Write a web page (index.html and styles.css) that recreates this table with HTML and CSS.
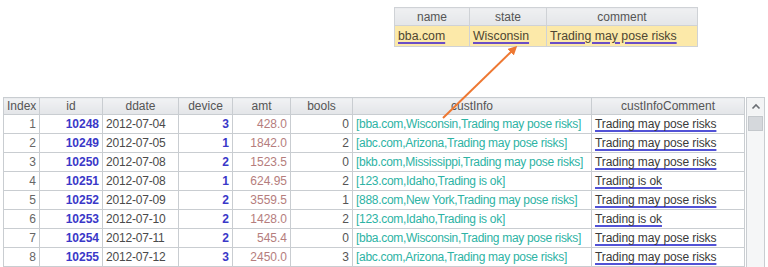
FILE: index.html
```html
<!DOCTYPE html>
<html>
<head>
<meta charset="utf-8">
<link rel="stylesheet" href="styles.css">
</head>
<body>
<div class="stage">
  <table class="lookup">
    <colgroup><col class="c-name"><col class="c-state"><col class="c-comment"></colgroup>
    <thead><tr><th>name</th><th>state</th><th>comment</th></tr></thead>
    <tbody><tr><td><span class="ul">bba.com</span></td><td><span class="ul">Wisconsin</span></td><td><span class="ul">Trading may pose risks</span></td></tr></tbody>
  </table>

  <div class="grid-wrap">
    <table class="main">
      <colgroup>
        <col class="w-index"><col class="w-id"><col class="w-ddate"><col class="w-device"><col class="w-amt"><col class="w-bools"><col class="w-cust"><col class="w-comment">
      </colgroup>
      <thead>
        <tr><th>Index</th><th>id</th><th>ddate</th><th>device</th><th>amt</th><th>bools</th><th>custInfo</th><th>custInfoComment</th></tr>
      </thead>
      <tbody>
        <tr><td class="idx">1</td><td class="id">10248</td><td class="date">2012-07-04</td><td class="dev">3</td><td class="amt">428.0</td><td class="bool">0</td><td class="cust">[bba.com,Wisconsin,Trading may pose risks]</td><td class="cmt"><span class="ul2">Trading may pose risks</span></td></tr>
        <tr><td class="idx">2</td><td class="id">10249</td><td class="date">2012-07-05</td><td class="dev">1</td><td class="amt">1842.0</td><td class="bool">2</td><td class="cust">[abc.com,Arizona,Trading may pose risks]</td><td class="cmt"><span class="ul2">Trading may pose risks</span></td></tr>
        <tr><td class="idx">3</td><td class="id">10250</td><td class="date">2012-07-08</td><td class="dev">2</td><td class="amt">1523.5</td><td class="bool">0</td><td class="cust">[bkb.com,Mississippi,Trading may pose risks]</td><td class="cmt"><span class="ul2">Trading may pose risks</span></td></tr>
        <tr><td class="idx">4</td><td class="id">10251</td><td class="date">2012-07-08</td><td class="dev">1</td><td class="amt">624.95</td><td class="bool">2</td><td class="cust">[123.com,Idaho,Trading is ok]</td><td class="cmt"><span class="ul2">Trading is ok</span></td></tr>
        <tr><td class="idx">5</td><td class="id">10252</td><td class="date">2012-07-09</td><td class="dev">2</td><td class="amt">3559.5</td><td class="bool">1</td><td class="cust">[888.com,New York,Trading may pose risks]</td><td class="cmt"><span class="ul2">Trading may pose risks</span></td></tr>
        <tr><td class="idx">6</td><td class="id">10253</td><td class="date">2012-07-10</td><td class="dev">2</td><td class="amt">1428.0</td><td class="bool">2</td><td class="cust">[123.com,Idaho,Trading is ok]</td><td class="cmt"><span class="ul2">Trading is ok</span></td></tr>
        <tr><td class="idx">7</td><td class="id">10254</td><td class="date">2012-07-11</td><td class="dev">2</td><td class="amt">545.4</td><td class="bool">0</td><td class="cust">[bba.com,Wisconsin,Trading may pose risks]</td><td class="cmt"><span class="ul2">Trading may pose risks</span></td></tr>
        <tr><td class="idx">8</td><td class="id">10255</td><td class="date">2012-07-12</td><td class="dev">3</td><td class="amt">2450.0</td><td class="bool">3</td><td class="cust">[abc.com,Arizona,Trading may pose risks]</td><td class="cmt"><span class="ul2">Trading may pose risks</span></td></tr>
      </tbody>
    </table>
    <div class="scrollbar">
      <div class="sb-btn"><svg width="10" height="7" viewBox="0 0 10 7"><path d="M1.5 5.5 L5 2 L8.5 5.5" fill="none" stroke="#6b6f74" stroke-width="1.6"/></svg></div>
      <div class="sb-thumb"></div>
      <div class="sb-track"></div>
    </div>
  </div>

  <svg class="arrow" width="768" height="267" viewBox="0 0 768 267">
    <defs>
      <marker id="head" markerWidth="9" markerHeight="9" refX="6" refY="4.5" orient="auto" markerUnits="userSpaceOnUse">
        <path d="M0 0 L9 4.5 L0 9 Z" fill="#ee7832"/>
      </marker>
    </defs>
    <line x1="443" y1="118" x2="515" y2="48" stroke="#ee7832" stroke-width="2" marker-end="url(#head)"/>
  </svg>
</div>
</body>
</html>
```

FILE: styles.css
```css
html, body {
  margin: 0;
  padding: 0;
  background: #ffffff;
  overflow: hidden;
}
body {
  font-family: "Liberation Sans", Arial, sans-serif;
  font-size: 12px;
  color: #444;
}
.stage {
  position: relative;
  width: 768px;
  height: 267px;
  padding-top: 7px;
  box-sizing: border-box;
}

/* lookup table */
.lookup {
  margin-left: 394px;
  border-collapse: collapse;
  table-layout: fixed;
  width: 303px;
}
.c-name { width: 75px; }
.c-state { width: 77px; }
.c-comment { width: 151px; }
.lookup th, .lookup td {
  border: 1px solid #cfd2d6;
  padding: 0 3px;
  white-space: nowrap;
  overflow: hidden;
}
.lookup th {
  height: 17px;
  font-weight: normal;
  color: #555;
  background: linear-gradient(#eff0f2, #e4e6e9);
  text-align: center;
}
.lookup td {
  height: 20px;
  background: #fce9a9;
  color: #4e4632;
  text-align: left;
  font-size: 12.3px;
}
.ul {
  text-decoration: underline;
  text-decoration-color: #6a4ec6;
  text-decoration-thickness: 2px;
  text-underline-offset: 2px;
}

/* main grid */
.grid-wrap {
  display: flex;
  margin-top: 50px;
  margin-left: 3px;
}
.main {
  border-collapse: collapse;
  table-layout: fixed;
  width: 741px;
}
.w-index { width: 36px; }
.w-id { width: 63px; }
.w-ddate { width: 76px; }
.w-device { width: 54px; }
.w-amt { width: 58px; }
.w-bools { width: 62px; }
.w-cust { width: 239px; }
.w-comment { width: 153px; }
.main th, .main td {
  border: 1px solid #c9cdd1;
  padding: 0 3px;
  white-space: nowrap;
  overflow: hidden;
}
.main th {
  height: 16px;
  font-weight: normal;
  color: #555;
  background: linear-gradient(#f1f2f4, #e3e5e8);
  text-align: center;
}
.main td {
  height: 18px;
  background: #fff;
}
.idx { text-align: right; color: #666; }
.id { text-align: right; color: #3a38c8; font-weight: bold; }
.date { text-align: left; color: #4a4a4a; letter-spacing: -0.2px; }
.dev { text-align: right; color: #3a38c8; font-weight: bold; }
.amt { text-align: right; color: #b57d7d; }
.bool { text-align: right; color: #555; }
.cust { text-align: left; color: #2db3a4; letter-spacing: -0.3px; }
.cmt { text-align: left; color: #3a3a3a; letter-spacing: -0.1px; }
.ul2 {
  text-decoration: underline;
  text-decoration-color: #5252d6;
  text-decoration-thickness: 2px;
  text-underline-offset: 2px;
}

.scrollbar {
  width: 17px;
  display: flex;
  flex-direction: column;
  border: 1px solid #c9cdd1;
  border-bottom: none;
  background: #f5f6f7;
  margin-left: 1px;
}
.sb-btn {
  height: 17px;
  display: flex;
  align-items: center;
  justify-content: center;
  background: #f3f4f5;
}
.sb-thumb {
  height: 13px;
  margin: 1px 1px 0 1px;
  background: #d5d8dc;
  border: 1px solid #c4c8cc;
}
.sb-track {
  flex: 1;
}

.arrow {
  position: absolute;
  left: 0;
  top: 0;
  pointer-events: none;
}
```
